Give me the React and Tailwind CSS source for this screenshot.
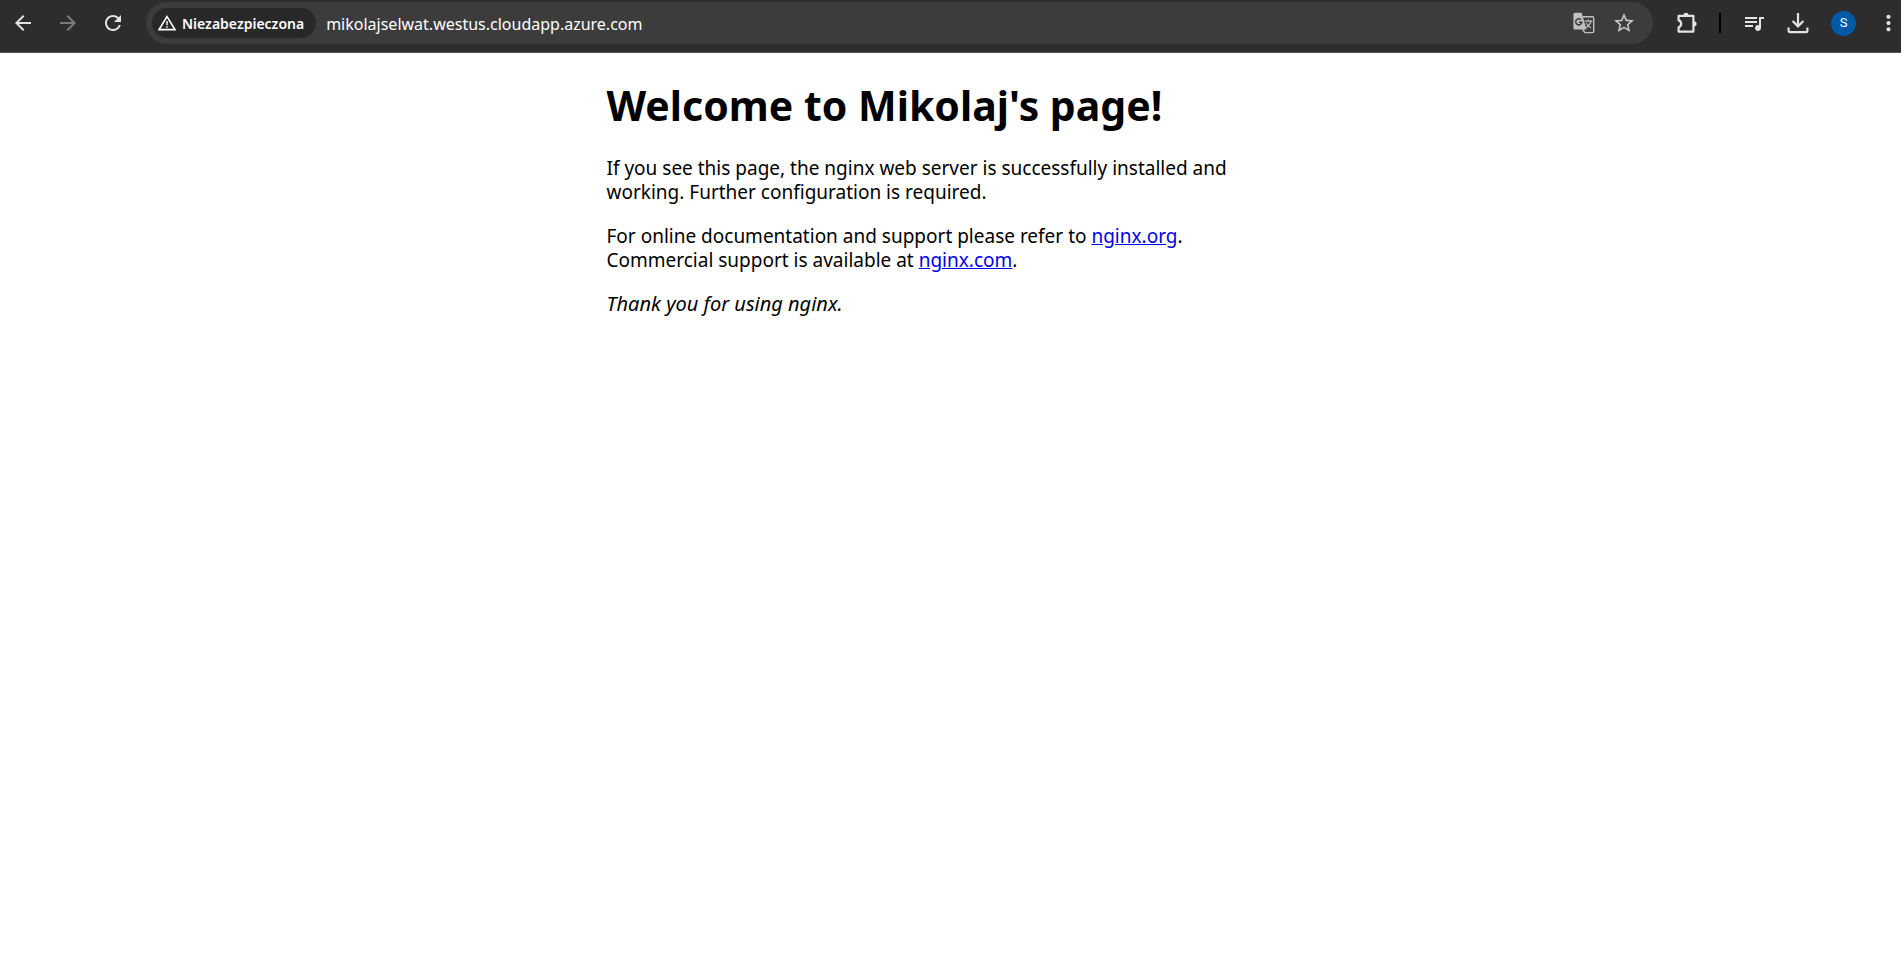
import React from "react";
import {
  MdArrowBack,
  MdArrowForward,
  MdRefresh,
  MdStarBorder,
  MdQueueMusic,
  MdMoreVert,
} from "react-icons/md";

function WarningIcon() {
  return (
    <svg width="18" height="16" viewBox="0 0 18 16" fill="none" stroke="#fff" aria-hidden="true">
      <path d="M9 1.6 17 14.6H1Z" strokeWidth="1.6" strokeLinejoin="miter" />
      <path d="M9 6v4.2M9 11.2v1.6" strokeWidth="1.4" />
    </svg>
  );
}

function TranslateIcon() {
  return (
    <svg width="22" height="22" viewBox="0 0 22 22" fill="none" aria-hidden="true">
      <path d="M10 4.8h9.4a1.3 1.3 0 0 1 1.3 1.3v13.2a1.3 1.3 0 0 1-1.3 1.3H12L9.5 17.5" stroke="#c0c0c0" strokeWidth="1.4" />
      <path d="M2 .8h6.6L13.6 17.6H2A1.6 1.6 0 0 1 .4 16V2.4A1.6 1.6 0 0 1 2 .8Z" fill="#c0c0c0" />
      <path d="M8 7.6a3.1 3.1 0 1 0 .9 2.6H5.8" stroke="#3c3c3c" strokeWidth="1.5" />
      <path d="M11.6 9.2h7.8M15.4 7.6v1.6M18 9.2c-.6 3-2.6 5-4.6 6.4M13.2 11c1 1.8 3 4 4.8 5" stroke="#c0c0c0" strokeWidth="1.2" />
    </svg>
  );
}

function PuzzleIcon() {
  return (
    <svg width="22" height="22" viewBox="0 0 22 22" fill="none" aria-hidden="true">
      <path d="M2.6 3.9H17.4V19.6H2.6V15.2C6 14.4 6 9.2 2.6 8.4Z" stroke="#e3e3e3" strokeWidth="2.2" strokeLinejoin="round" />
      <path d="M7.4 3.4a2.6 2.6 0 0 1 5.2 0ZM18 9.2a2.6 2.6 0 0 1 0 5.2Z" fill="#e3e3e3" />
    </svg>
  );
}

function DownloadIcon() {
  return (
    <svg width="22" height="22" viewBox="0 0 22 22" fill="none" stroke="#e3e3e3" strokeWidth="2.2" aria-hidden="true">
      <path d="M11 1v13M5.6 9l5.4 5.4L16.4 9" />
      <path d="M1.6 15.6v3.2a1.4 1.4 0 0 0 1.4 1.4h16a1.4 1.4 0 0 0 1.4-1.4v-3.2" />
    </svg>
  );
}

function ToolButton({ label, children, className = "" }) {
  return (
    <button type="button" aria-label={label} className={"flex h-9 shrink-0 items-center justify-center " + className}>
      {children}
    </button>
  );
}

function Toolbar() {
  return (
    <header className="flex h-[53px] items-start border-b border-[#565656] bg-[#2d2d2d] pt-[2px] text-[#e3e3e3]">
      <nav className="flex h-[42px] w-[146px] shrink-0 items-center gap-[9px] pl-[5px]" aria-label="Nawigacja">
        <ToolButton label="Wstecz" className="w-9"><MdArrowBack size={24} /></ToolButton>
        <ToolButton label="Dalej" className="w-9 text-[#7b7b7b]"><MdArrowForward size={24} /></ToolButton>
        <ToolButton label="Odśwież" className="w-9"><MdRefresh size={24} /></ToolButton>
      </nav>
      <div className="flex h-[42px] min-w-0 flex-1 items-center rounded-full bg-[#3c3c3c] pr-[17px] pl-[6px]">
        <button type="button" className="flex h-[30px] shrink-0 items-center gap-[6px] rounded-full bg-[#282828] pr-[12px] pl-[6px] font-['Noto_Sans',sans-serif] text-[14px] font-semibold text-white">
          <WarningIcon />
          Niezabezpieczona
        </button>
        <input
          type="text"
          aria-label="Adres strony"
          defaultValue="mikolajselwat.westus.cloudapp.azure.com"
          className="min-w-0 flex-1 bg-transparent pt-[2px] pl-[10px] font-['Noto_Sans',sans-serif] text-[16px] text-white outline-none"
        />
        <div className="flex items-center gap-[17px] text-[#c7c7c7]">
          <ToolButton label="Przetłumacz"><TranslateIcon /></ToolButton>
          <ToolButton label="Dodaj do zakładek"><MdStarBorder size={24} /></ToolButton>
        </div>
      </div>
      <div className="flex h-[42px] shrink-0 items-center pl-[23px]">
        <ToolButton label="Rozszerzenia"><PuzzleIcon /></ToolButton>
        <span className="ml-[21px] h-5 w-[2px] bg-black" />
        <ToolButton label="Multimedia" className="ml-[21px]"><MdQueueMusic size={24} /></ToolButton>
        <ToolButton label="Pobrane" className="ml-[21px]"><DownloadIcon /></ToolButton>
        <button type="button" aria-label="Profil S" className="ml-[22px] flex size-[25px] items-center justify-center rounded-full bg-[#0059a5] font-[Roboto,sans-serif] text-[13px] text-white">S</button>
        <ToolButton label="Menu" className="ml-[20px] w-[25px]"><MdMoreVert size={26} /></ToolButton>
      </div>
    </header>
  );
}

export default function App() {
  return (
    <div className="min-h-screen bg-white">
      <title>Welcome to Mikolaj's page!</title>
      <Toolbar />
      <main className="mx-auto max-w-[688px] pt-[28px] font-['Noto_Sans',sans-serif] text-[19px] leading-[24px] text-black">
        <h1 className="text-[41px] leading-[48px] font-bold">Welcome to Mikolaj's page!</h1>
        <p className="mt-[27px]">
          If you see this page, the nginx web server is successfully installed and
          <br />
          working. Further configuration is required.
        </p>
        <p className="mt-5">
          For online documentation and support please refer to{" "}
          <a href="http://nginx.org/" className="text-[#0000ee] underline">nginx.org</a>.
          <br />
          Commercial support is available at{" "}
          <a href="http://nginx.com/" className="text-[#0000ee] underline">nginx.com</a>.
        </p>
        <p className="mt-5 text-[20px]"><em>Thank you for using nginx.</em></p>
      </main>
    </div>
  );
}
